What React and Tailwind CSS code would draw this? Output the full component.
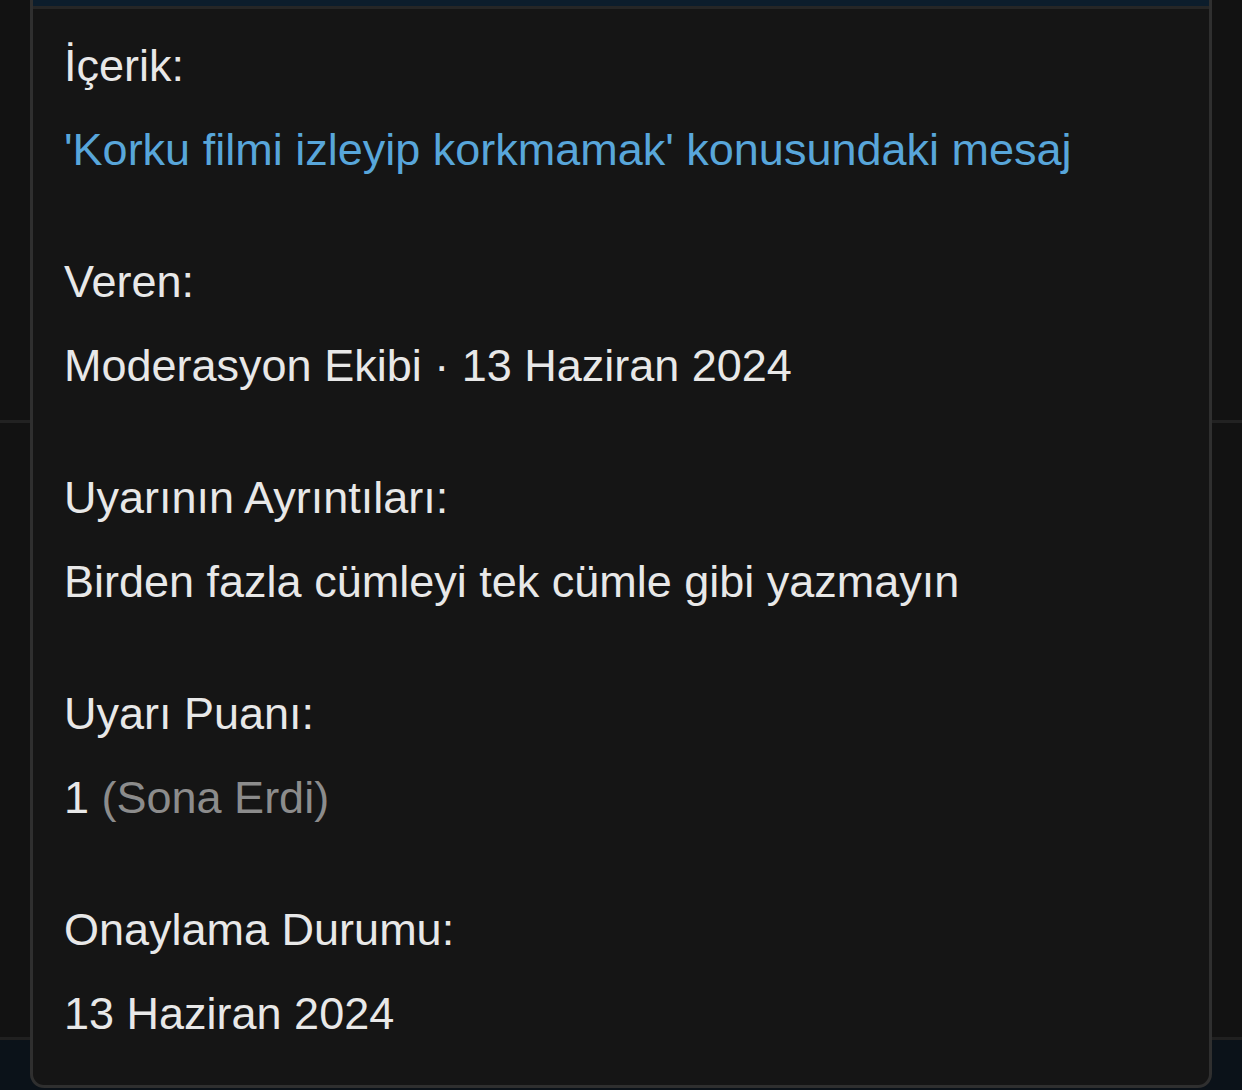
import React from 'react';

const items = [
  { label: 'İçerik:', value: <span className="text-[#58a6da]">'Korku filmi izleyip korkmamak' konusundaki mesaj</span> },
  { label: 'Veren:', value: <span>Moderasyon Ekibi · 13 Haziran 2024</span> },
  { label: 'Uyarının Ayrıntıları:', value: <span>Birden fazla cümleyi tek cümle gibi yazmayın</span> },
  { label: 'Uyarı Puanı:', value: <span>1 <span className="text-[#8c8c8c]">(Sona Erdi)</span></span> },
  { label: 'Onaylama Durumu:', value: <span>13 Haziran 2024</span> },
];

export default function App() {
  return (
    <div className="relative w-[1242px] h-[1090px] overflow-hidden bg-[#121212]" style={{ fontFamily: '"Liberation Sans", Arial, sans-serif' }}>
      {/* page behind the panel */}
      <div className="absolute inset-x-0 top-[420px] h-[3px] bg-[#222]" />
      <div className="absolute inset-x-0 top-[1037px] bottom-0 border-t-[3px] border-[#202020] bg-[#0b1219]" />

      {/* panel */}
      <div className="absolute left-[30px] right-[30px] top-0 bottom-[2px] flex flex-col rounded-b-[14px] border-x-[3px] border-b-[3px] border-[#2f2f2f] bg-[#151515]">
        <div className="h-[6px] shrink-0 bg-[#0c1d2c]" />
        <div className="h-[3px] shrink-0 bg-[#262626]" />
        <div className="flex flex-col px-[31px] pt-[15px] text-[45px] leading-[84px] text-[#e8e8e8]">
          {items.map((it, i) => (
            <div key={i} className="mb-[48px]">
              <div>{it.label}</div>
              <div>{it.value}</div>
            </div>
          ))}
        </div>
      </div>
    </div>
  );
}
